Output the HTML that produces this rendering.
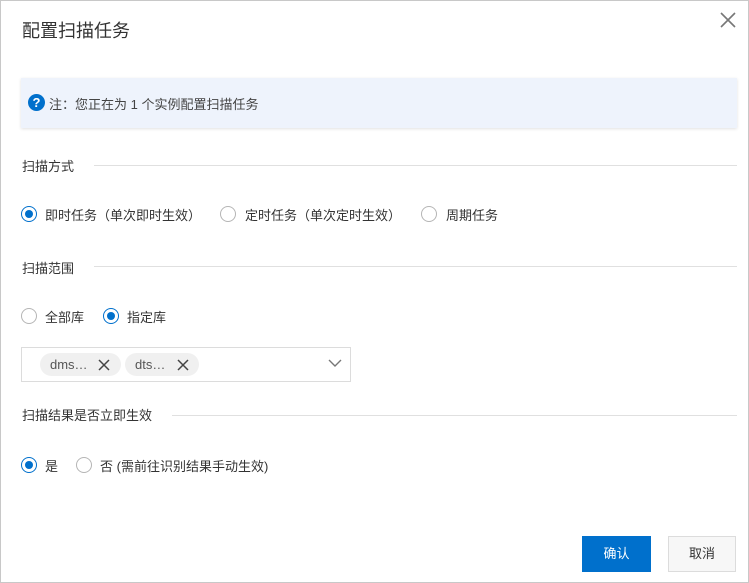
<!DOCTYPE html><html><head><meta charset="utf-8"><style>
*{box-sizing:border-box;margin:0;padding:0}
body{width:749px;height:583px;background:#fff;font-family:"Liberation Sans","Noto Sans CJK SC",sans-serif;color:#333;font-size:13px;position:relative;overflow:hidden}
.frame{position:absolute;left:0;top:0;width:749px;height:583px;border:1px solid #c8c8c8}
.a{position:absolute;white-space:nowrap}
.line{position:absolute;height:1px;background:#e0e0e0}
.r{position:absolute;width:16px;height:16px;border-radius:50%;border:1px solid #b5b5b5;background:#fff}
.r.on{border-color:#0070cc}
.r.on::after{content:"";position:absolute;left:3px;top:3px;width:8px;height:8px;border-radius:50%;background:#0070cc}
.tag{position:absolute;top:353px;height:23px;border-radius:12px;background:#f0f0f0;color:#555;font-size:13px;line-height:23px;padding-left:10px}
</style></head><body>
<div class="frame"></div>
<div class="a" style="left:22px;top:17px;font-size:18px;color:#333">配置扫描任务</div>
<svg class="a" style="left:720px;top:12px" width="16" height="16" viewBox="0 0 16 16"><path d="M1 1L15 15M15 1L1 15" stroke="#777" stroke-width="1.6"/></svg>
<div class="a" style="left:21px;top:78px;width:716px;height:50px;background:#eef3fc;box-shadow:0 1px 3px rgba(0,0,0,.12)"></div>
<div class="a" style="left:28px;top:94px;width:17px;height:17px;border-radius:50%;background:#0070cc;color:#fff;font-weight:bold;font-size:13px;line-height:17px;text-align:center">?</div>
<div class="a" style="left:49px;top:94px;color:#444">注：您正在为 1 个实例配置扫描任务</div>
<div class="a" style="left:22px;top:156px">扫描方式</div><div class="line" style="left:94px;top:165px;width:643px"></div>
<div class="r on" style="left:21px;top:206px"></div><div class="a" style="left:45px;top:205px">即时任务（单次即时生效）</div>
<div class="r" style="left:220px;top:206px"></div><div class="a" style="left:245px;top:205px">定时任务（单次定时生效）</div>
<div class="r" style="left:421px;top:206px"></div><div class="a" style="left:446px;top:205px">周期任务</div>
<div class="a" style="left:22px;top:258px">扫描范围</div><div class="line" style="left:94px;top:266px;width:643px"></div>
<div class="r" style="left:21px;top:308px"></div><div class="a" style="left:45px;top:307px">全部库</div>
<div class="r on" style="left:103px;top:308px"></div><div class="a" style="left:127px;top:307px">指定库</div>
<div class="a" style="left:21px;top:347px;width:330px;height:35px;border:1px solid #dcdcdc"></div>
<div class="tag" style="left:40px;width:81px">dms…</div>
<svg class="a" style="left:98px;top:359px" width="12" height="12"><path d="M1 1L11 11M11 1L1 11" stroke="#444" stroke-width="1.5"/></svg>
<div class="tag" style="left:125px;width:74px">dts…</div>
<svg class="a" style="left:177px;top:359px" width="12" height="12"><path d="M1 1L11 11M11 1L1 11" stroke="#444" stroke-width="1.5"/></svg>
<svg class="a" style="left:328px;top:359px" width="14" height="9"><path d="M1 1L7 7L13 1" stroke="#777" stroke-width="1.4" fill="none"/></svg>
<div class="a" style="left:22px;top:405px">扫描结果是否立即生效</div><div class="line" style="left:172px;top:415px;width:565px"></div>
<div class="r on" style="left:21px;top:457px"></div><div class="a" style="left:45px;top:456px">是</div>
<div class="r" style="left:76px;top:457px"></div><div class="a" style="left:100px;top:456px">否 (需前往识别结果手动生效)</div>
<div class="a" style="left:582px;top:536px;width:69px;height:36px;background:#0070cc;color:#fff;text-align:center;line-height:36px">确认</div>
<div class="a" style="left:668px;top:536px;width:68px;height:36px;background:#f7f7f7;border:1px solid #dcdcdc;color:#333;text-align:center;line-height:34px">取消</div>
</body></html>
